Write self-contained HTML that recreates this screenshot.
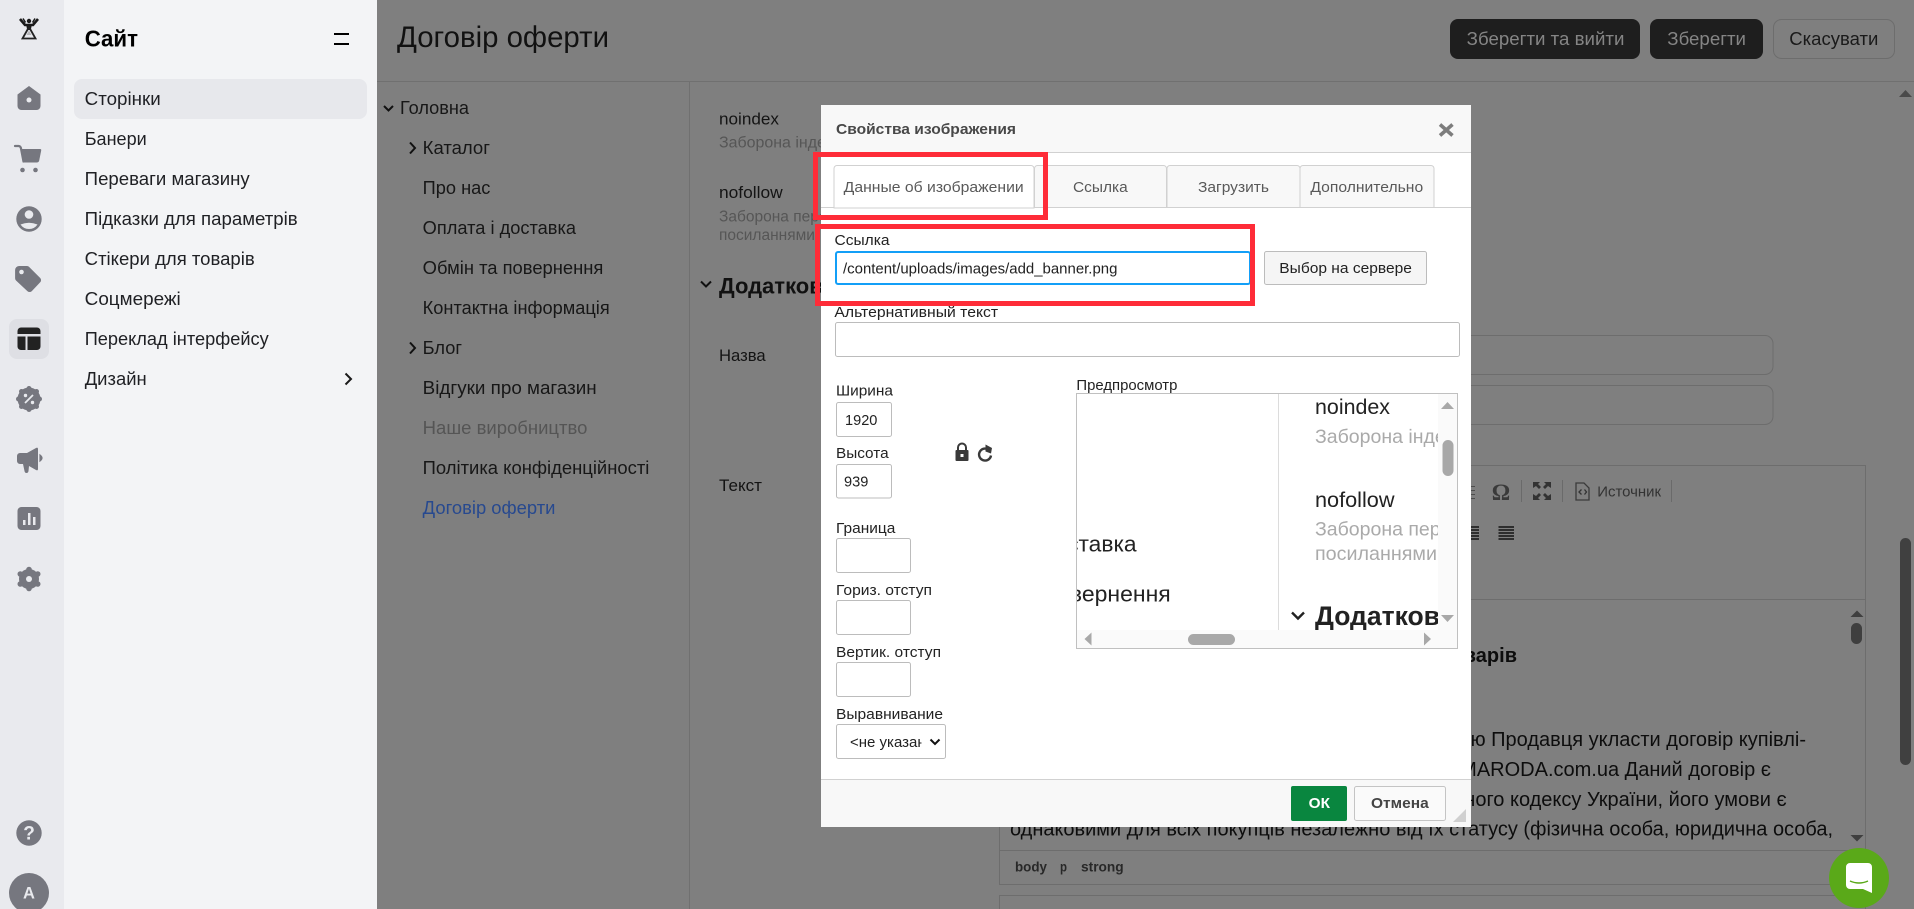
<!DOCTYPE html>
<html lang="uk">
<head>
<meta charset="utf-8">
<title>Договір оферти</title>
<style>
html,body{margin:0;padding:0;width:1914px;height:909px;overflow:hidden;background:#7f7f7f}
svg{display:block}
text{font-family:"Liberation Sans","DejaVu Sans",sans-serif;white-space:pre}
.s{font-size:18.5px;fill:#1f2024}
.t{font-size:18px;fill:#171717}
.d{font-size:15px;fill:#222}
.l{font-size:15px;fill:#222}
.b{font-weight:bold}
.i{fill:#76777f}
.in{fill:#fff;stroke:#bcbcbc;stroke-width:1}
.tab{fill:#f8f8f8;stroke:#d1d1d1;stroke-width:1}
.tt{font-size:15px;fill:#595959}
.e{font-size:20px;fill:#0d0d0d}
.pv{font-size:19.5px;fill:#aaa}
</style>
</head>
<body>
<svg xmlns="http://www.w3.org/2000/svg" width="1914" height="909" viewBox="0 0 1914 909">
<defs>
<clipPath id="pc"><rect x="1077" y="394" width="361" height="236"/></clipPath>
<clipPath id="sc"><rect x="846" y="725" width="75.5" height="33"/></clipPath>
</defs>

<!-- main dimmed page -->
<rect x="377" y="0" width="1537" height="909" fill="#7f7f7f"/>
<rect x="377" y="81" width="1537" height="1" fill="#707070"/>
<rect x="689" y="81" width="1" height="828" fill="#707070"/>
<text x="397" y="47" font-size="29.500" fill="#111" textLength="212" lengthAdjust="spacingAndGlyphs">Договір оферти</text>
<rect x="1450" y="19" width="190" height="40" rx="8" fill="#1e1e1e"/>
<text x="1466.700" y="45" font-size="18" fill="#858585" textLength="157.700" lengthAdjust="spacingAndGlyphs">Зберегти та вийти</text>
<rect x="1650" y="19" width="113" height="40" rx="8" fill="#1e1e1e"/>
<text x="1667.300" y="45" font-size="18" fill="#858585" textLength="78.700" lengthAdjust="spacingAndGlyphs">Зберегти</text>
<rect x="1773.500" y="19.500" width="121" height="39" rx="8" fill="none" stroke="#6d6d6d"/>
<text x="1789.300" y="45" font-size="18" fill="#1a1a1a" textLength="89" lengthAdjust="spacingAndGlyphs">Скасувати</text>

<!-- tree -->
<path d="M384 106l4.500 4.500 4.500-4.500" fill="none" stroke="#111" stroke-width="2"/>
<text class="t" x="400" y="114" textLength="69" lengthAdjust="spacingAndGlyphs">Головна</text>
<path d="M410 142.500l5 5.500-5 5.500" fill="none" stroke="#111" stroke-width="2"/>
<text class="t" x="422.700" y="154" textLength="67.300" lengthAdjust="spacingAndGlyphs">Каталог</text>
<text class="t" x="422.700" y="194" textLength="67.700" lengthAdjust="spacingAndGlyphs">Про нас</text>
<text class="t" x="422.700" y="234" textLength="153.300" lengthAdjust="spacingAndGlyphs">Оплата і доставка</text>
<text class="t" x="422.700" y="274" textLength="180.700" lengthAdjust="spacingAndGlyphs">Обмін та повернення</text>
<text class="t" x="422.700" y="314" textLength="187" lengthAdjust="spacingAndGlyphs">Контактна інформація</text>
<path d="M410 342.500l5 5.500-5 5.500" fill="none" stroke="#111" stroke-width="2"/>
<text class="t" x="422.700" y="354" textLength="39.300" lengthAdjust="spacingAndGlyphs">Блог</text>
<text class="t" x="422.700" y="394" textLength="174" lengthAdjust="spacingAndGlyphs">Відгуки про магазин</text>
<text class="t" x="422.700" y="434" style="fill:#555" textLength="164.700" lengthAdjust="spacingAndGlyphs">Наше виробництво</text>
<text class="t" x="422.700" y="474" textLength="226.700" lengthAdjust="spacingAndGlyphs">Політика конфіденційності</text>
<text class="t" x="422.700" y="514" style="fill:#27498f" textLength="132.700" lengthAdjust="spacingAndGlyphs">Договір оферти</text>

<!-- right column behind dialog -->
<text x="719" y="124.500" font-size="17" fill="#141414" textLength="60" lengthAdjust="spacingAndGlyphs">noindex</text>
<text x="719" y="147.500" font-size="15.500" fill="#565656" textLength="148" lengthAdjust="spacingAndGlyphs">Заборона індексації</text>
<text x="719" y="198" font-size="17" fill="#141414" textLength="63.700" lengthAdjust="spacingAndGlyphs">nofollow</text>
<text x="719" y="221.500" font-size="15.500" fill="#565656">Заборона переходу за</text>
<text x="719" y="240" font-size="15.500" fill="#565656">посиланнями</text>
<path d="M701 281.500l5 5 5-5" fill="none" stroke="#111" stroke-width="2"/>
<text x="719" y="293.500" font-size="22" font-weight="bold" fill="#111">Додаткова інформація</text>
<text x="719" y="361" font-size="17" fill="#141414" textLength="46.700" lengthAdjust="spacingAndGlyphs">Назва</text>
<text x="719" y="491" font-size="17" fill="#141414" textLength="43" lengthAdjust="spacingAndGlyphs">Текст</text>

<rect x="1000" y="335.500" width="773" height="39" rx="8" fill="none" stroke="#6d6d6d"/>
<rect x="1000" y="385.500" width="773" height="39" rx="8" fill="none" stroke="#6d6d6d"/>

<!-- editor -->
<rect x="999.500" y="465.500" width="866" height="419" fill="none" stroke="#6d6d6d"/>
<rect x="1000" y="599" width="866" height="1" fill="#6d6d6d"/>
<rect x="1000" y="850" width="866" height="1" fill="#6d6d6d"/>
<rect x="999.500" y="895.500" width="866" height="30" fill="none" stroke="#6d6d6d"/>
<g fill="#4d4d4d">
<rect x="1471" y="486" width="4" height="1"/><rect x="1471" y="490" width="4" height="1"/><rect x="1471" y="494" width="4" height="1"/><rect x="1471" y="498" width="4" height="1"/>
</g>
<text x="1501" y="500" font-size="23" font-weight="bold" text-anchor="middle" fill="#3a3a3a" style="font-family:'Liberation Serif',serif">Ω</text>
<rect x="1521" y="480" width="1" height="22" fill="#6a6a6a"/>
<g fill="#333">
<path d="M1533 482h7l-2 2 3 3-2 2-3-3-3 2z"/>
<path d="M1551 482h-7l2 2-3 3 2 2 3-3 3 2z"/>
<path d="M1533 500h7l-2-2 3-3-2-2-3 3-3-2z"/>
<path d="M1551 500h-7l2-2-3-3 2-2 3 3 3-2z"/>
</g>
<rect x="1562" y="480" width="1" height="22" fill="#6a6a6a"/>
<path d="M1576 483h8l5 5v12h-13z" fill="none" stroke="#3a3a3a" stroke-width="1.300"/>
<path d="M1581.500 489.500l-2.500 2.500 2.500 2.500M1584.500 489.500l2 2.500-2 2.500" fill="none" stroke="#333" stroke-width="1.300"/>
<text x="1597.300" y="496.500" font-size="15" fill="#333" textLength="63.700" lengthAdjust="spacingAndGlyphs">Источник</text>
<rect x="1671" y="480" width="1" height="22" fill="#6a6a6a"/>
<g fill="#2e2e2e">
<rect x="1471" y="526" width="8" height="2"/><rect x="1471" y="529" width="8" height="2"/><rect x="1471" y="532" width="8" height="2"/><rect x="1471" y="535" width="8" height="2"/><rect x="1471" y="538" width="8" height="2"/>
<rect x="1498.500" y="526" width="15.500" height="2"/><rect x="1498.500" y="529" width="15.500" height="2"/><rect x="1498.500" y="532" width="15.500" height="2"/><rect x="1498.500" y="535" width="15.500" height="2"/><rect x="1498.500" y="538" width="15.500" height="2"/>
</g>
<text class="e b" x="1517" y="662" text-anchor="end">Повернення товарів</text>
<text class="e" x="1806" y="746" text-anchor="end">Цей договір передбачає пропозицію Продавця укласти договір купівлі-</text>
<text class="e" x="1771" y="776" text-anchor="end">продажу товарів на сайті MARODA.com.ua Даний договір є</text>
<text class="e" x="1786.700" y="806" text-anchor="end">публічним згідно цивільного кодексу України, його умови є</text>
<text class="e" x="1010" y="835.700" textLength="823" lengthAdjust="spacingAndGlyphs">однаковими для всіх покупців незалежно від їх статусу (фізична особа, юридична особа,</text>
<path d="M1850.500 617h13l-6.500-6.500z" fill="#3f3f3f"/>
<rect x="1851" y="623" width="11" height="21" rx="5.500" fill="#3f3f3f"/>
<path d="M1850.500 835h13l-6.500 6.500z" fill="#3f3f3f"/>
<text x="1015" y="871.500" font-size="14" font-weight="bold" fill="#282828" textLength="32" lengthAdjust="spacingAndGlyphs">body</text>
<text x="1060" y="871.500" font-size="14" font-weight="bold" fill="#282828" textLength="7" lengthAdjust="spacingAndGlyphs">p</text>
<text x="1081" y="871.500" font-size="14" font-weight="bold" fill="#282828" textLength="42.700" lengthAdjust="spacingAndGlyphs">strong</text>

<!-- page scrollbar -->
<path d="M1899 97h13l-6.500-7z" fill="#4a4a4a"/>
<rect x="1900" y="538" width="11" height="227" rx="5.500" fill="#404040"/>

<!-- chat bubble -->
<circle cx="1859" cy="878" r="30" fill="#5aa919"/>
<path d="M1850 863h18a4 4 0 0 1 4 4v26l-9-4h-13a4 4 0 0 1-4-4v-18a4 4 0 0 1 4-4z" fill="#fff"/>
<path d="M1850 881q9 4 18 0" fill="none" stroke="#5aa919" stroke-width="1.500"/>

<!-- left rail -->
<rect x="0" y="0" width="64" height="909" fill="#e9eaee"/>
<rect x="64" y="0" width="313" height="909" fill="#f3f4f6"/>
<path d="M20 19l5 6h8l5-6" fill="none" stroke="#1a1a1a" stroke-width="2.600"/>
<path d="M23 18.500l2.500 4M35 18.500l-2.500 4" fill="none" stroke="#1a1a1a" stroke-width="1.500"/>
<circle cx="29" cy="21" r="2.200" fill="#1a1a1a"/>
<path d="M26 24h6l-1.200 6h-3.600z" fill="#1a1a1a"/>
<path d="M29 27l-6.500 11.500h13z" fill="none" stroke="#222" stroke-width="1.800"/>
<path d="M26.500 35h5l-2.500-4.500z" fill="#b5b5b8"/>
<!-- home -->
<path class="i" d="M29 86l11.500 8.500v11.500a4 4 0 0 1-4 4h-15a4 4 0 0 1-4-4v-11.500z"/>
<circle cx="29" cy="100" r="2.500" fill="#e9eaee"/>
<!-- cart -->
<path d="M15 146h3.500q2 0 2.500 2.500l2.500 13" fill="none" stroke="#76777f" stroke-width="2.200" stroke-linecap="round"/>
<path class="i" d="M21 149h19q1.500 0 1.200 1.500l-2 10q-.4 2-2.500 2h-14z"/>
<circle class="i" cx="22.500" cy="170" r="2.300"/><circle class="i" cx="35.500" cy="170" r="2.300"/>
<!-- user -->
<circle class="i" cx="29" cy="219" r="12.700"/>
<circle cx="29" cy="214.500" r="4.300" fill="#e9eaee"/>
<path d="M20.500 224.500q8.500-3.500 17 0q-3 4.500-8.500 4.500t-8.500-4.500z" fill="#e9eaee"/>
<!-- tag -->
<path class="i" d="M19 266h8a3 3 0 0 1 2.200 1l11 11a3 3 0 0 1 0 4.200l-8.500 9a3 3 0 0 1-4.200 0L16 280.500a3 3 0 0 1-.9-2.200V270a4 4 0 0 1 3.900-4z"/>
<circle cx="21.500" cy="272" r="2.300" fill="#e9eaee"/>
<!-- layout -->
<rect x="9" y="319" width="40" height="40" rx="8" fill="#dedfe4"/>
<path d="M21 327.500h16a3.500 3.500 0 0 1 3.500 3.500v3h-23v-3a3.500 3.500 0 0 1 3.500-3.500z" fill="#222"/>
<path d="M17.500 336.500h8v13.500h-4.500a3.500 3.500 0 0 1-3.500-3.500z" fill="#222"/>
<path d="M27.500 336.500h13v10a3.500 3.500 0 0 1-3.500 3.500h-9.500z" fill="#222"/>
<!-- percent -->
<circle class="i" cx="29" cy="399" r="11.500"/>
<g class="i"><circle cx="29" cy="388.500" r="2.500"/><circle cx="29" cy="409.500" r="2.500"/><circle cx="18.500" cy="399" r="2.500"/><circle cx="39.500" cy="399" r="2.500"/><circle cx="21.500" cy="391.500" r="2.500"/><circle cx="36.500" cy="391.500" r="2.500"/><circle cx="21.500" cy="406.500" r="2.500"/><circle cx="36.500" cy="406.500" r="2.500"/></g>
<path d="M33 395l-8 8" stroke="#e9eaee" stroke-width="1.800"/>
<circle cx="25.500" cy="395.500" r="1.700" fill="#e9eaee"/><circle cx="32.500" cy="402.500" r="1.700" fill="#e9eaee"/>
<!-- megaphone -->
<path class="i" d="M20 453h7l9-5q2-1 2 1v20q0 2-2 1l-7-4-.500 5q-.3 2-2 2t-2-2l-1.500-7h-3a3 3 0 0 1-3-3v-5a3 3 0 0 1 3-3z"/>
<path class="i" d="M40 455q4 3 0 6z" stroke="#76777f" stroke-width="1.200"/>
<!-- chart -->
<rect class="i" x="17.500" y="507" width="23" height="23" rx="4"/>
<rect x="23" y="520" width="2.500" height="5" fill="#e9eaee"/><rect x="28" y="513" width="2.500" height="12" fill="#e9eaee"/><rect x="33" y="517" width="2.500" height="8" fill="#e9eaee"/>
<!-- gear -->
<circle class="i" cx="29" cy="579" r="10"/>
<g class="i"><circle cx="29" cy="569.500" r="2.800"/><circle cx="29" cy="588.500" r="2.800"/><circle cx="37.700" cy="574" r="2.800"/><circle cx="37.700" cy="584" r="2.800"/><circle cx="20.300" cy="574" r="2.800"/><circle cx="20.300" cy="584" r="2.800"/></g>
<circle cx="29" cy="579" r="3" fill="#e9eaee"/>
<!-- help -->
<circle class="i" cx="29" cy="833" r="12.700"/>
<text x="29" y="839.500" font-size="19" font-weight="bold" fill="#e9eaee" text-anchor="middle">?</text>
<!-- avatar -->
<circle class="i" cx="29" cy="893" r="20"/>
<text x="29" y="898.500" font-size="16.500" font-weight="bold" fill="#e9eaee" text-anchor="middle">A</text>

<!-- sidebar -->
<text x="84.700" y="46.500" font-size="23" font-weight="bold" fill="#000" textLength="53.300" lengthAdjust="spacingAndGlyphs">Сайт</text>
<rect x="334" y="33" width="15" height="2" fill="#000"/><rect x="334" y="43" width="15" height="2" fill="#000"/>
<rect x="74" y="79" width="293" height="40" rx="8" fill="#e7e8ec"/>
<text class="s" x="84.700" y="105" textLength="76" lengthAdjust="spacingAndGlyphs">Сторінки</text>
<text class="s" x="84.700" y="145" textLength="62" lengthAdjust="spacingAndGlyphs">Банери</text>
<text class="s" x="84.700" y="185" textLength="165" lengthAdjust="spacingAndGlyphs">Переваги магазину</text>
<text class="s" x="84.700" y="225" textLength="213" lengthAdjust="spacingAndGlyphs">Підказки для параметрів</text>
<text class="s" x="84.700" y="265" textLength="170" lengthAdjust="spacingAndGlyphs">Стікери для товарів</text>
<text class="s" x="84.700" y="305" textLength="96" lengthAdjust="spacingAndGlyphs">Соцмережі</text>
<text class="s" x="84.700" y="345" textLength="184" lengthAdjust="spacingAndGlyphs">Переклад інтерфейсу</text>
<text class="s" x="84.700" y="385" textLength="62" lengthAdjust="spacingAndGlyphs">Дизайн</text>
<path d="M345.500 373.500l5.500 5.500-5.500 5.500" fill="none" stroke="#1a1a1a" stroke-width="2"/>

<!-- dialog -->
<rect x="821" y="105" width="650" height="722" fill="#fff"/>
<rect x="821" y="105" width="650" height="47" fill="#f8f8f8"/>
<rect x="821" y="152" width="650" height="1" fill="#d1d1d1"/>
<text x="836" y="134" font-size="15" font-weight="bold" fill="#484848" textLength="180" lengthAdjust="spacingAndGlyphs">Свойства изображения</text>
<path d="M1440 124.500l12.500 11M1452.500 124.500l-12.500 11" stroke="#7d7d7d" stroke-width="3.600"/>

<rect x="821" y="207" width="650" height="1" fill="#d1d1d1"/>
<path class="tab" d="M1034.500 207.500v-39a3 3 0 0 1 3-3h126a3 3 0 0 1 3 3v39z"/>
<path class="tab" d="M1167 207.500v-39a3 3 0 0 1 3-3h127a3 3 0 0 1 3 3v39z"/>
<path class="tab" d="M1300 207.500v-39a3 3 0 0 1 3-3h128a3 3 0 0 1 3 3v39z"/>
<path d="M834 208v-39.500a3 3 0 0 1 3-3h194a3 3 0 0 1 3 3V208z" fill="#fff" stroke="#d1d1d1"/>
<text class="tt" x="843.700" y="192" textLength="180" lengthAdjust="spacingAndGlyphs">Данные об изображении</text>
<text class="tt" x="1073" y="192" textLength="54.700" lengthAdjust="spacingAndGlyphs">Ссылка</text>
<text class="tt" x="1198" y="192" textLength="71" lengthAdjust="spacingAndGlyphs">Загрузить</text>
<text class="tt" x="1310.400" y="192" textLength="112.800" lengthAdjust="spacingAndGlyphs">Дополнительно</text>

<text class="l" x="834.500" y="245" textLength="55" lengthAdjust="spacingAndGlyphs">Ссылка</text>
<rect x="836" y="252" width="414" height="32" rx="2" fill="#fff" stroke="#139ff7" stroke-width="2"/>
<text class="d" x="843" y="273.300" fill="#111" textLength="274.400" lengthAdjust="spacingAndGlyphs">/content/uploads/images/add_banner.png</text>
<rect x="1264.500" y="251.500" width="162" height="33" rx="2" fill="#f5f5f5" stroke="#bcbcbc"/>
<text class="d" x="1279.300" y="273" textLength="132.600" lengthAdjust="spacingAndGlyphs">Выбор на сервере</text>
<text class="l" x="834.400" y="317" textLength="163.700" lengthAdjust="spacingAndGlyphs">Альтернативный текст</text>
<rect class="in" x="835.500" y="322.500" width="624" height="34" rx="2"/>

<text class="l" x="836" y="395.500" textLength="57" lengthAdjust="spacingAndGlyphs">Ширина</text>
<rect class="in" x="836.500" y="402.500" width="55" height="34" rx="2"/>
<text class="d" x="845" y="425" textLength="32.400" lengthAdjust="spacingAndGlyphs">1920</text>
<text class="l" x="836" y="458" textLength="52.600" lengthAdjust="spacingAndGlyphs">Высота</text>
<rect class="in" x="836.500" y="464.500" width="55" height="33.500" rx="2"/>
<text class="d" x="844" y="486.700" textLength="24.400" lengthAdjust="spacingAndGlyphs">939</text>
<!-- lock & reset -->
<rect x="955.500" y="450" width="13" height="11" rx="1" fill="#3a3a3a"/>
<path d="M958 450v-2.500a4 4 0 0 1 8 0v2.500" fill="none" stroke="#3a3a3a" stroke-width="2"/>
<rect x="960.500" y="454" width="3" height="3" fill="#fff"/>
<path d="M989.500 450.500a6 6 0 1 0 1.500 5" fill="none" stroke="#3a3a3a" stroke-width="2.400"/>
<path d="M985.500 444.500l6.500 3.500-1 5.500-5.500-2z" fill="#3a3a3a"/>

<text class="l" x="836" y="533" textLength="59.300" lengthAdjust="spacingAndGlyphs">Граница</text>
<rect class="in" x="836.500" y="538.500" width="74" height="34" rx="2"/>
<text class="l" x="836" y="595" textLength="96" lengthAdjust="spacingAndGlyphs">Гориз. отступ</text>
<rect class="in" x="836.500" y="600.500" width="74" height="34" rx="2"/>
<text class="l" x="836" y="657" textLength="105" lengthAdjust="spacingAndGlyphs">Вертик. отступ</text>
<rect class="in" x="836.500" y="662.500" width="74" height="34" rx="2"/>
<text class="l" x="836" y="719" textLength="107" lengthAdjust="spacingAndGlyphs">Выравнивание</text>
<rect class="in" x="836.500" y="724.500" width="109" height="34" rx="2"/>
<g clip-path="url(#sc)"><text class="d" x="850" y="747">&lt;не указано&gt;</text></g>
<path d="M930.500 739.500l4.500 4.500 4.500-4.500" fill="none" stroke="#111" stroke-width="2"/>

<!-- preview -->
<text class="l" x="1076.400" y="390" textLength="101" lengthAdjust="spacingAndGlyphs">Предпросмотр</text>
<rect x="1076.500" y="393.500" width="381" height="255" fill="#fff" stroke="#c0c0c0"/>
<rect x="1438" y="394" width="19" height="236" fill="#fafafa"/>
<rect x="1077" y="630" width="380" height="18" fill="#fafafa"/>
<g clip-path="url(#pc)">
<rect x="1278" y="394" width="1" height="236" fill="#dcdcdc"/>
<text x="945" y="551.700" font-size="22" fill="#222" textLength="191.600" lengthAdjust="spacingAndGlyphs">Оплата і доставка</text>
<text x="944.800" y="601.700" font-size="22" fill="#222" textLength="225.900" lengthAdjust="spacingAndGlyphs">Обмін та повернення</text>
<text x="1315" y="414" font-size="21" fill="#222" textLength="75" lengthAdjust="spacingAndGlyphs">noindex</text>
<text class="pv" x="1315" y="443">Заборона індексації</text>
<text x="1315" y="507" font-size="21" fill="#222" textLength="79.500" lengthAdjust="spacingAndGlyphs">nofollow</text>
<text class="pv" x="1315" y="535.700">Заборона переходу</text>
<text class="pv" x="1315" y="560" textLength="122" lengthAdjust="spacingAndGlyphs">посиланнями</text>
<path d="M1292 612.500l6 6 6-6" fill="none" stroke="#222" stroke-width="2.400"/>
<text x="1315" y="625" font-size="26.500" font-weight="bold" fill="#222">Додаткова</text>
</g>
<path d="M1441 409h13l-6.500-7z" fill="#a8a8a8"/>
<rect x="1442.500" y="440" width="11" height="36" rx="5.500" fill="#a8a8a8"/>
<path d="M1441 615h13l-6.500 7z" fill="#a8a8a8"/>
<path d="M1091.500 632.500v13l-7-6.500z" fill="#a8a8a8"/>
<rect x="1188" y="634" width="47" height="11" rx="5.500" fill="#a8a8a8"/>
<path d="M1424 632.500v13l7-6.500z" fill="#a8a8a8"/>

<!-- footer -->
<rect x="821" y="779" width="650" height="48" fill="#f8f8f8"/>
<rect x="821" y="779" width="650" height="1" fill="#d1d1d1"/>
<rect x="1291" y="786" width="56" height="35" rx="2" fill="#09863f"/>
<text x="1308.700" y="808" font-size="15" font-weight="bold" fill="#fff" textLength="21.300" lengthAdjust="spacingAndGlyphs">ОК</text>
<rect x="1354.500" y="786.500" width="91" height="34" rx="2" fill="#fafafa" stroke="#c4c4c4"/>
<text x="1371" y="808" font-size="15" font-weight="bold" fill="#444" textLength="57.700" lengthAdjust="spacingAndGlyphs">Отмена</text>
<path d="M1453 822h13v-13z" fill="#d0d0d0"/>

<!-- red annotation boxes -->
<rect x="815.500" y="154.500" width="230" height="63" fill="none" stroke="#fe2c38" stroke-width="5"/>
<rect x="817.500" y="226.500" width="435" height="77" fill="none" stroke="#fe2c38" stroke-width="5"/>
</svg>
</body>
</html>
